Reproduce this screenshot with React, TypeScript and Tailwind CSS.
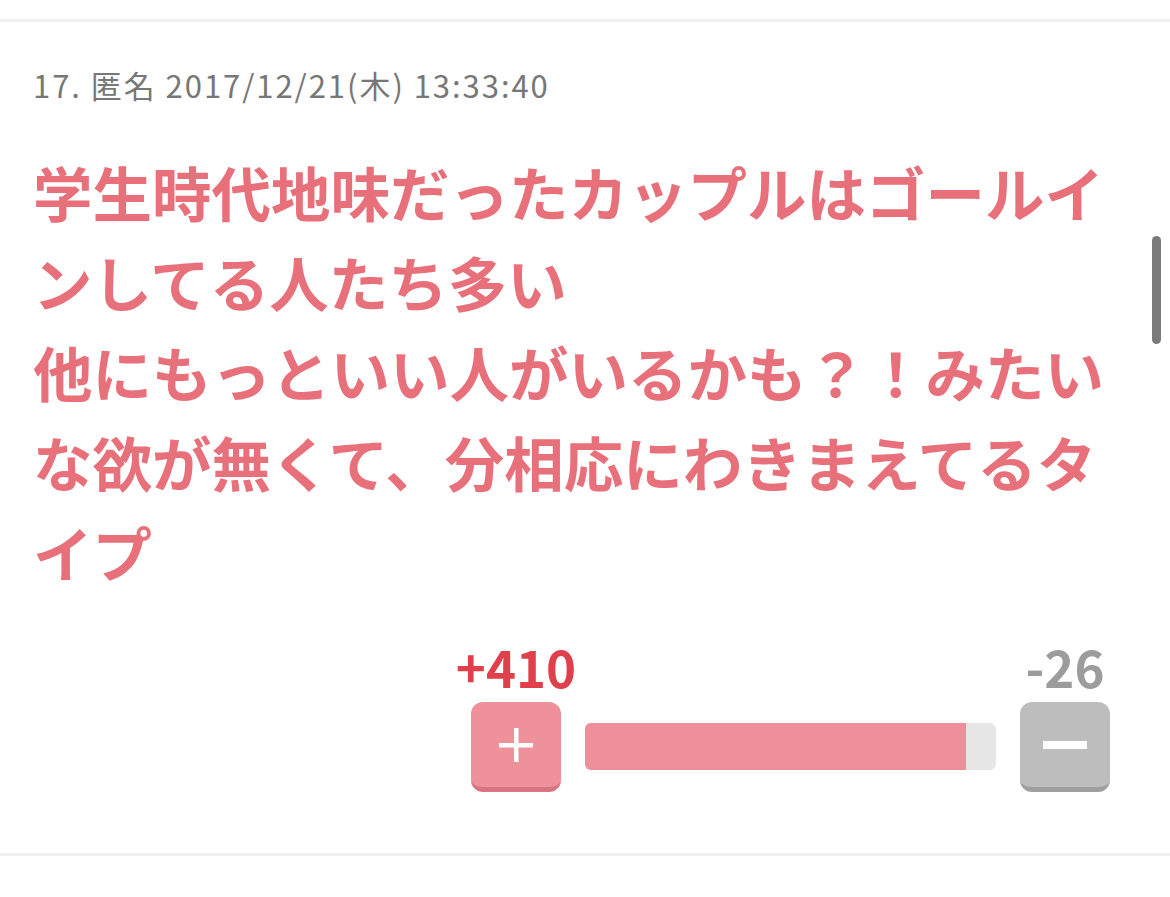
const font = { fontFamily: '"Noto Sans CJK JP", "Noto Sans", sans-serif' }

const VoteButton = ({ kind }: { kind: 'plus' | 'minus' }) => {
  const isPlus = kind === 'plus'
  return (
    <button
      className={
        isPlus
          ? 'relative flex h-[90px] w-[90px] items-center justify-center rounded-[12px] border-b-[5px] border-[#d97580] bg-[#ee919a]'
          : 'relative flex h-[90px] w-[90px] items-center justify-center rounded-[12px] border-b-[5px] border-[#9f9f9f] bg-[#bdbdbd]'
      }
    >
      {isPlus ? (
        <svg width="34" height="34" viewBox="0 0 34 34">
          <rect x="15" y="0" width="4.5" height="34" fill="#fff" />
          <rect x="0" y="15" width="34" height="4.5" fill="#fff" />
        </svg>
      ) : (
        <svg width="44" height="8" viewBox="0 0 44 8">
          <rect x="0" y="0" width="44" height="8" fill="#fff" />
        </svg>
      )}
    </button>
  )
}

export default function App() {
  const plus = 410
  const minus = 26

  return (
    <div className="relative h-[897px] w-[1170px] overflow-hidden bg-white" style={font}>
      <div className="h-[19px]" />
      <div className="h-[3px] bg-[#f0f0f0]" />

      <article className="pl-[33px] pr-[60px]">
        <header className="mt-[43px] text-[31px] leading-[40px] tracking-[1.95px] text-[#777]">
          17. 匿名 2017/12/21(木) 13:33:40
        </header>

        <p className="mt-[41px] w-[1104px] text-[59.5px] font-bold leading-[90px] text-[#e8707a]">
          学生時代地味だったカップルはゴールインしてる人たち多い
          <br />
          他にもっといい人がいるかも？！みたいな欲が無くて、分相応にわきまえてるタイプ
        </p>

        <div className="mt-[46px] flex justify-end">
          <div className="flex flex-col">
            <div className="flex justify-between text-[51px] font-bold leading-[48px]">
              <span className="flex w-[90px] justify-center whitespace-nowrap text-[#e0404c]">+{plus}</span>
              <span className="flex w-[90px] justify-center whitespace-nowrap text-[#9c9c9c]">-{minus}</span>
            </div>
            <div className="mt-[12px] flex items-start gap-[24px]">
              <VoteButton kind="plus" />
              <div className="mt-[21px] h-[47px] w-[411px] overflow-hidden rounded-[6px] bg-[#e6e6e6]">
                <div className="h-full w-[92.7%] bg-[#ee9099]" />
              </div>
              <VoteButton kind="minus" />
            </div>
          </div>
        </div>
      </article>

      <div className="absolute left-0 right-0 top-[853px] h-[3px] bg-[#efefef]" />
      <div className="absolute left-[1152px] top-[236px] h-[108px] w-[9px] rounded-full bg-[#7a7a7a]" />
    </div>
  )
}
